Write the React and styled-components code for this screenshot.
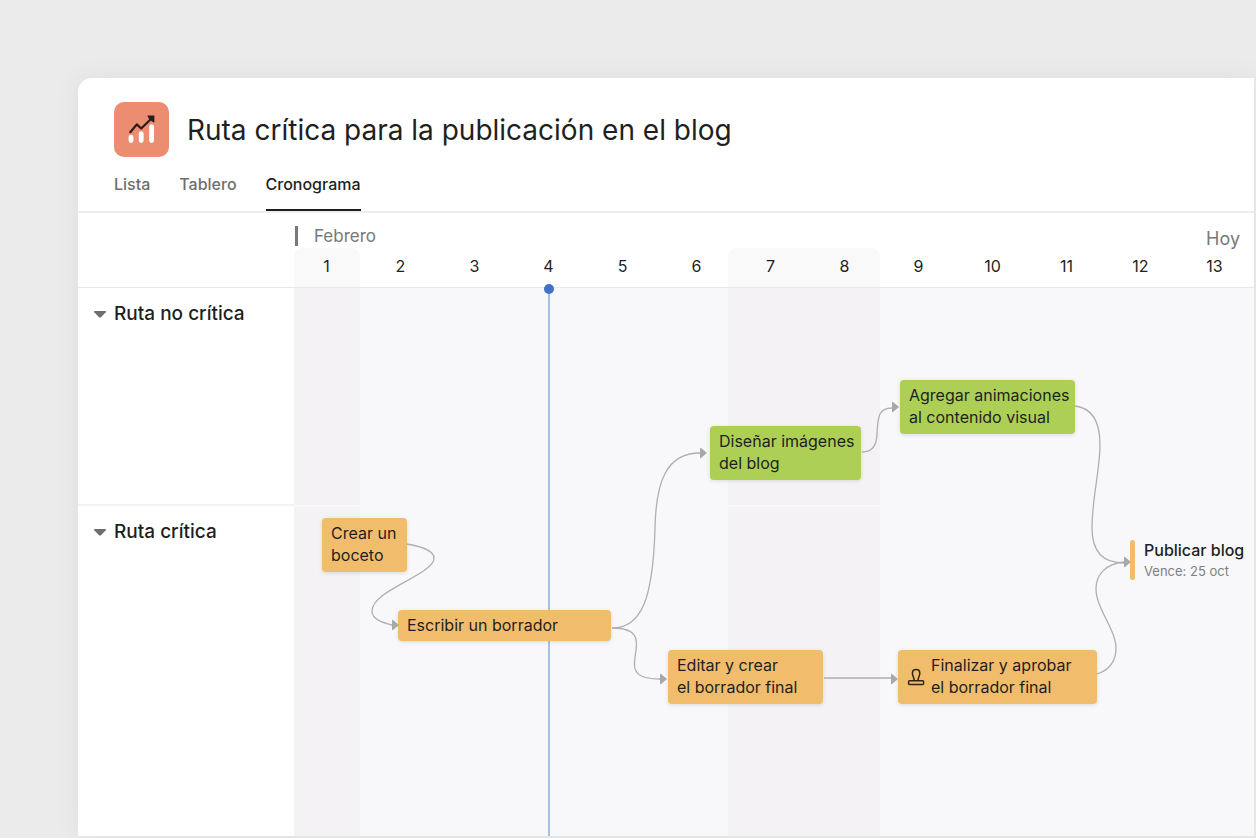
import React, { useState } from "react";
import styled, { createGlobalStyle } from "styled-components";

const GlobalStyle = createGlobalStyle`
  * {
    box-sizing: border-box;
  }

  body {
    margin: 0;
    background: #ebebeb;
    color: #1e1f21;
    font-family: Inter, "Liberation Sans", sans-serif;
  }
`;

// Styled components
const Page = styled.div`
  display: flex;
  min-height: 100vh;
  padding: 78px 2px 2px 78px;
  overflow: hidden;
`;

const Card = styled.main`
  display: flex;
  flex: 1;
  flex-direction: column;
  min-width: 0;
  overflow: hidden;
  background: white;
  border-top-left-radius: 14px;
  box-shadow: 0 0 28px rgba(0, 0, 0, 0.06);
`;

const Header = styled.header`
  padding: 24px 36px 0;
  border-bottom: 2px solid #eeecee;
`;

const TitleRow = styled.div`
  display: flex;
  align-items: center;
  gap: 18px;
`;

const ProjectIcon = styled.div`
  width: 55px;
  height: 55px;
  border-radius: 10px;
  background: #ec8d71;
`;

const Title = styled.h1`
  margin: 0;
  font-size: 28px;
  font-weight: 400;
  line-height: 36px;
`;

const Tabs = styled.nav`
  display: flex;
  gap: 29px;
`;

const Tab = styled.a`
  padding: 16px 0 14px;
  border-bottom: 2px solid ${({ $active }) => ($active ? "#1e1f21" : "transparent")};
  color: ${({ $active }) => ($active ? "#1e1f21" : "#6d6e6f")};
  font-size: 16px;
  font-weight: 500;
  line-height: 22px;
  text-decoration: none;
`;

const Timeline = styled.section`
  display: grid;
  flex: 1;
  grid-template-columns: 216px minmax(0, 1fr);
  grid-template-rows: 75px 1fr;
`;

const Corner = styled.div`
  border-bottom: 1px solid #e9e7e9;
`;

const DateHeader = styled.div`
  position: relative;
  overflow: hidden;
  border-bottom: 1px solid #e9e7e9;
`;

const MonthRow = styled.div`
  display: flex;
  align-items: center;
  justify-content: space-between;
  height: 35px;
  padding: 10px 14px 0 1px;
  color: #777879;
`;

const Month = styled.span`
  padding-left: 16px;
  border-left: 3px solid #777879;
  font-size: 17px;
  line-height: 20px;
`;

const Today = styled.span`
  padding-top: 6px;
  font-size: 18px;
  line-height: 22px;
`;

const Days = styled.div`
  position: relative;
  display: grid;
  grid-template-columns: 65px;
  grid-auto-columns: 74px;
  grid-auto-flow: column;
  text-align: center;
  font-size: 16px;
  line-height: 36px;
`;

const Day = styled.span`
  &:not(:first-child) {
    padding-left: 9px;
  }
`;

const Groups = styled.div`
  display: flex;
  flex-direction: column;
`;

const Group = styled.div`
  padding: 14px;

  &:first-child {
    height: 218px;
    border-bottom: 2px solid #f4f3f4;
  }
`;

const GroupToggle = styled.button`
  display: flex;
  align-items: center;
  gap: 6px;
  padding: 0;
  border: none;
  background: none;
  color: inherit;
  font: 500 19px/24px Inter, "Liberation Sans", sans-serif;
  cursor: pointer;

  svg {
    transform: ${({ $open }) => ($open ? "none" : "rotate(-90deg)")};
  }
`;

const Canvas = styled.div`
  position: relative;
  background: #f8f7f9;
`;

const Weekend = styled.div`
  position: absolute;
  top: ${({ $top }) => $top || 0}px;
  bottom: 0;
  left: ${({ $left }) => $left}px;
  width: ${({ $width }) => $width}px;
  border-radius: ${({ $top }) => ($top ? "8px 8px 0 0" : 0)};
  background: ${({ $top }) => ($top ? "#faf9fa" : "#f4f2f5")};
`;

const LaneLine = styled.div`
  position: absolute;
  top: 217px;
  left: 0;
  right: 0;
  height: 2px;
  background: #f8f7f9;
`;

const TodayLine = styled.div`
  position: absolute;
  top: 1px;
  bottom: 0;
  left: 254px;
  width: 2px;
  background: #a9c0e2;

  &::before {
    content: "";
    position: absolute;
    top: -5px;
    left: -4px;
    width: 10px;
    height: 10px;
    border-radius: 50%;
    background: #4170c8;
  }
`;

const Links = styled.svg`
  position: absolute;
  inset: 0;
  width: 100%;
  height: 100%;
  overflow: visible;
  pointer-events: none;
`;

const Task = styled.div`
  position: absolute;
  left: ${({ $x }) => $x}px;
  top: ${({ $y }) => $y}px;
  display: flex;
  gap: 6px;
  width: ${({ $w }) => $w}px;
  height: ${({ $h }) => $h || 54}px;
  padding: 4px 9px;
  border-radius: 4px;
  background: ${({ $color }) => ($color === "green" ? "#aecf55" : "#f1bd6c")};
  box-shadow: 0 1px 4px rgba(0, 0, 0, 0.12);
  font-size: 16px;
  line-height: 22px;
  white-space: pre;

  svg {
    align-self: center;
  }
`;

const Milestone = styled.div`
  position: absolute;
  left: 836px;
  top: 252px;
  display: flex;
  gap: 9px;
  white-space: nowrap;
`;

const MilestoneBar = styled.span`
  width: 5px;
  height: 40px;
  border-radius: 3px;
  background: #f1bd6c;
`;

const MilestoneName = styled.div`
  font-size: 16px;
  font-weight: 500;
  line-height: 21px;
`;

const MilestoneDue = styled.div`
  color: #7f7f82;
  font-size: 13px;
  line-height: 20px;
`;

const tabs = ["Lista", "Tablero", "Cronograma"];
const groups = ["Ruta no crítica", "Ruta crítica"];
const days = Array.from({ length: 13 }, (_, i) => i + 1);

// x of the first column and width of each shaded weekend block
const weekends = [
  { left: 0, width: 66 },
  { left: 434, width: 152 },
];

const tasks = [
  { name: "Crear un\nboceto", x: 28, y: 230, w: 85 },
  { name: "Escribir un borrador", x: 104, y: 322, w: 213, h: 31 },
  { name: "Diseñar imágenes\ndel blog", x: 416, y: 138, w: 151, color: "green" },
  { name: "Agregar animaciones\nal contenido visual", x: 606, y: 92, w: 175, color: "green" },
  { name: "Editar y crear\nel borrador final", x: 374, y: 362, w: 155 },
  { name: "Finalizar y aprobar\nel borrador final", x: 604, y: 362, w: 199, approval: true },
];

const links = [
  "M113 256C130 259 140 264 140 270C140 287 78 302 78 323C78 332 90 335 98 337",
  "M318 340C348 340 359 310 361 240C362 194 372 165 406 165",
  "M318 340C350 340 342 358 341 370C338 385 345 391 366 391",
  "M568 164C579 164 583 157 583 145C584 130 584 120 598 120",
  "M530 390H597",
  "M781 118C799 120 806 136 806 157C806 182 798 210 798 240C798 262 808 275 830 275",
  "M803 386C815 382 822 373 822 360C822 342 802 320 802 301C802 286 812 276 830 274",
];

const arrowTips = [
  [105, 337],
  [413, 165],
  [373, 391],
  [605, 119],
  [604, 391],
  [837, 274],
];

const ChartIcon = () => (
  <svg width="55" height="55" viewBox="0 0 55 55" aria-hidden="true">
    <g stroke="#fff" strokeWidth="4.8" strokeLinecap="round">
      <path d="M17 35.2V38.6M27.2 31.6V38.6M37.6 24.6V38.6" />
    </g>
    <path
      d="M16.3 30.2L22.8 22.4L27.2 26.5L38 16"
      fill="none"
      stroke="#2b1c1c"
      strokeWidth="2.2"
      strokeLinecap="round"
      strokeLinejoin="round"
    />
    <path d="M33.4 13.6H40.4V20.6L38 19.6L34.4 16Z" fill="#2b1c1c" />
  </svg>
);

const StampIcon = () => (
  <svg width="18" height="18" viewBox="0 0 18 18" fill="none" stroke="#33240f" strokeWidth="1.5" aria-hidden="true">
    <rect x="1.6" y="12.7" width="15" height="3.7" rx="1" />
    <path d="M7.2 12.5C7.2 9.5 5.4 8 5.4 5.2C5.4 3 7 1.5 9.1 1.5C11.2 1.5 12.8 3 12.8 5.2C12.8 8 11 9.5 11 12.5" />
  </svg>
);

const App = () => {
  const [activeTab, setActiveTab] = useState("Cronograma");
  const [closed, setClosed] = useState({});

  const toggle = (name) => {
    setClosed((prev) => ({ ...prev, [name]: !prev[name] }));
  };

  return (
    <Page>
      <GlobalStyle />
      <Card>
        <Header>
          <TitleRow>
            <ProjectIcon>
              <ChartIcon />
            </ProjectIcon>
            <Title>Ruta crítica para la publicación en el blog</Title>
          </TitleRow>
          <Tabs>
            {tabs.map((tab) => (
              <Tab
                key={tab}
                href={`#${tab.toLowerCase()}`}
                $active={tab === activeTab}
                onClick={() => setActiveTab(tab)}
              >
                {tab}
              </Tab>
            ))}
          </Tabs>
        </Header>

        <Timeline>
          <Corner />
          <DateHeader>
            {weekends.map((w) => (
              <Weekend key={w.left} $top={35} $left={w.left} $width={w.width} />
            ))}
            <MonthRow>
              <Month>Febrero</Month>
              <Today>Hoy</Today>
            </MonthRow>
            <Days>
              {days.map((day) => (
                <Day key={day}>{day}</Day>
              ))}
            </Days>
          </DateHeader>

          <Groups>
            {groups.map((name) => (
              <Group key={name}>
                <GroupToggle
                  type="button"
                  $open={!closed[name]}
                  aria-expanded={!closed[name]}
                  onClick={() => toggle(name)}
                >
                  <svg width="16" height="16" viewBox="0 0 16 16" aria-hidden="true">
                    <path d="M2.6 5H13.4Q14.4 5.3 13.7 6.3L9 11.2Q8 12 7 11.2L2.3 6.3Q1.6 5.3 2.6 5Z" fill="#6d6e6f" />
                  </svg>
                  {name}
                </GroupToggle>
              </Group>
            ))}
          </Groups>

          <Canvas>
            {weekends.map((w) => (
              <Weekend key={w.left} $left={w.left} $width={w.width} />
            ))}
            <LaneLine />
            <TodayLine />
            {tasks.map((task) => (
              <Task
                key={task.name}
                $x={task.x}
                $y={task.y}
                $w={task.w}
                $h={task.h}
                $color={task.color}
              >
                {task.approval && <StampIcon />}
                {task.name}
              </Task>
            ))}
            <Milestone>
              <MilestoneBar />
              <div>
                <MilestoneName>Publicar blog</MilestoneName>
                <MilestoneDue>Vence: 25 oct</MilestoneDue>
              </div>
            </Milestone>
            <Links aria-hidden="true">
              {links.map((d) => (
                <path key={d} d={d} fill="none" stroke="#b0aeb1" strokeWidth="1.3" />
              ))}
              {arrowTips.map(([x, y]) => (
                <path
                  key={`${x}-${y}`}
                  d={`M${x} ${y}L${x - 6} ${y - 5}Q${x - 7} ${y - 6} ${x - 7} ${y - 4}V${y + 4}Q${x - 7} ${y + 6} ${x - 6} ${y + 5}Z`}
                  fill="#a9a7aa"
                />
              ))}
            </Links>
          </Canvas>
        </Timeline>
      </Card>
    </Page>
  );
};

export default App;
